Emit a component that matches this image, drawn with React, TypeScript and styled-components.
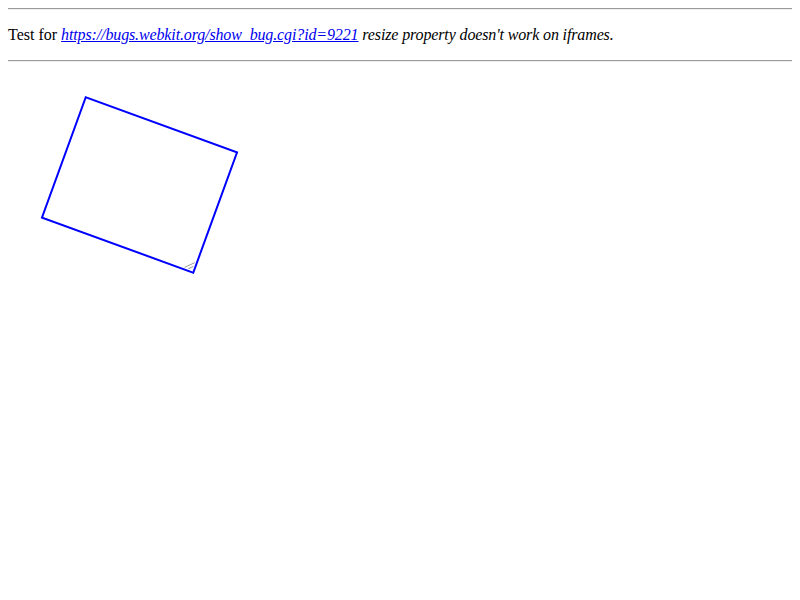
import React from "react";
import styled, { createGlobalStyle } from "styled-components";

const Global = createGlobalStyle`
  body {
    margin: 0;
    padding: 8px;
    font-family: "Liberation Serif", "Times New Roman", serif;
    font-size: 16px;
    background: #fff;
    color: #000;
  }
`;

const Rule = styled.hr<{ $first?: boolean }>`
  margin: ${(p) => (p.$first ? "0 0 8px" : "8px 0")};
  border: none;
  border-top: 1px solid #9a9a9a;
  border-bottom: 1px solid #eeeeee;
  height: 0;
`;

const Para = styled.p`
  margin: 16px 0;
  line-height: 18px;
`;

const Em = styled.i`
  font-style: italic;
  letter-spacing: -0.13px;
`;

const Link = styled.a`
  color: #0000ee;
  text-decoration: underline;
`;

const Frame = styled.div`
  position: relative;
  box-sizing: content-box;
  margin: 58px 50px 50px;
  width: 159px;
  height: 126px;
  border: 2px solid #0000ff;
  transform: rotate(20deg);
  background: #fff;
`;

const Grip = styled.svg`
  position: absolute;
  right: 0;
  bottom: 0;
  width: 12px;
  height: 12px;
`;

export default function App() {
  return (
    <>
      <Global />
      <Rule $first />
      <Para>
        Test for{" "}
        <Em>
          <Link href="#">https://bugs.webkit.org/show_bug.cgi?id=9221</Link>{" "}
          resize property doesn't work on iframes.
        </Em>
      </Para>
      <Rule />
      <Frame>
        <Grip viewBox="0 0 12 12">
          <line x1="3" y1="11" x2="11" y2="3" stroke="#9a9a9a" strokeWidth="1" />
          <line x1="7" y1="11" x2="11" y2="7" stroke="#9a9a9a" strokeWidth="1" />
        </Grip>
      </Frame>
    </>
  );
}
